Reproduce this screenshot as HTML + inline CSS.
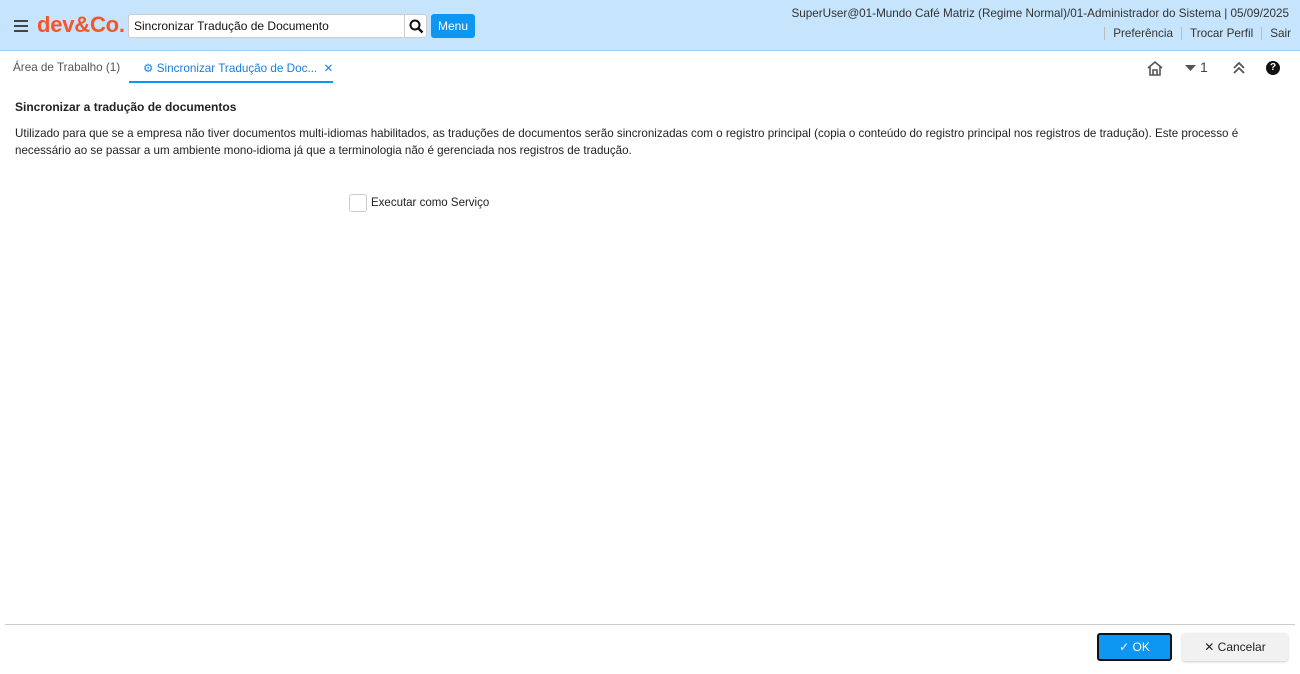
<!DOCTYPE html>
<html><head><meta charset="utf-8"><style>
*{box-sizing:border-box;margin:0;padding:0}
body{width:1300px;height:674px;background:#fff;font-family:"Liberation Sans",sans-serif;color:#222;position:relative;overflow:hidden;font-size:12px}
.hdr{position:absolute;left:0;top:0;width:1300px;height:51px;background:#c6e5fc;border-bottom:1px solid #9fd0f5}
.ham{position:absolute;left:14px;top:20px;width:14px}
.ham i{display:block;height:2px;background:#444;margin-bottom:3px}
.logo{position:absolute;left:37px;top:12px;font-size:22px;font-weight:bold;color:#f4562b;letter-spacing:-0.2px}
.search{position:absolute;left:128px;top:14px;width:299px;height:24px;background:#fff;border:1px solid #ccc;border-radius:3px;font-size:12px;padding:4px 5px;color:#111}
.sbtn{position:absolute;left:404px;top:14px;width:23px;height:24px;border-left:1px solid #ccc}
.menu{position:absolute;left:431px;top:14px;width:44px;height:24px;background:#0d96f2;color:#fff;border-radius:3px;font-size:12px;text-align:center;line-height:24px}
.user{position:absolute;right:11px;top:7px;font-size:11.7px;color:#333}
.links{position:absolute;right:9px;top:27px;font-size:11.7px;color:#333}
.links span{border-left:1px solid #bbb;padding:0 0 0 8px;margin-left:8px}
.tab1{position:absolute;left:13px;top:61px;color:#555;font-size:11.7px}
.tab2{position:absolute;left:143px;top:61px;color:#1a7fe0;font-size:11.7px}
.tabline{position:absolute;left:129px;top:81px;width:204px;height:2px;background:#0d96f2}
h1{position:absolute;left:15px;top:100px;font-size:12px;font-weight:bold}
.desc{position:absolute;left:15px;top:125px;width:1270px;font-size:11.6px;line-height:17px;color:#222}
.cb{position:absolute;left:349px;top:194px;width:18px;height:18px;border:1px solid #ccc;border-radius:3px}
.cbl{position:absolute;left:371px;top:197px;font-size:11.5px}
.foot{position:absolute;left:5px;top:624px;width:1290px;height:1px;background:#ccc}
.ok{position:absolute;left:1097px;top:633px;width:75px;height:28px;background:#0d96f2;border:2px solid #111;border-radius:3px;color:#fff;text-align:center;line-height:24px;font-size:12px}
.cancel{position:absolute;left:1182px;top:633px;width:106px;height:28px;background:#f1f1f1;border-radius:3px;text-align:center;line-height:28px;font-size:12px;color:#222;box-shadow:0 1px 2px rgba(0,0,0,.2)}
</style></head><body>
<div class="hdr">
<div class="ham"><i></i><i></i><i></i></div>
<div class="logo">dev&amp;Co.</div>
<div class="search">Sincronizar Tradução de Documento</div>
<div class="sbtn"><svg width="23" height="24" viewBox="0 0 23 24"><circle cx="10" cy="11" r="4.5" fill="none" stroke="#111" stroke-width="2"/><path d="M13.5 14.5l4 4" stroke="#111" stroke-width="2.4"/></svg></div>
<div class="menu">Menu</div>
<div class="user">SuperUser@01-Mundo Café Matriz (Regime Normal)/01-Administrador do Sistema | 05/09/2025</div>
<div class="links"><span>Preferência</span><span>Trocar Perfil</span><span>Sair</span></div>
</div>
<div class="tab1">Área de Trabalho (1)</div>
<div class="tab2">⚙ Sincronizar Tradução de Doc... &nbsp;✕</div>
<div class="tabline"></div>
<svg style="position:absolute;left:1146px;top:60px" width="18" height="17" viewBox="0 0 18 17"><path d="M2 8L9 2l7 6M4 7v8h10V7M7 15v-5h4v5" fill="none" stroke="#555" stroke-width="1.6"/></svg>
<svg style="position:absolute;left:1185px;top:64px" width="12" height="8"><path d="M0 1h11L5.5 7z" fill="#555"/></svg>
<div style="position:absolute;left:1200px;top:59px;font-size:14px;color:#444">1</div>
<svg style="position:absolute;left:1232px;top:61px" width="14" height="14" viewBox="0 0 14 14"><path d="M2 7l5-5 5 5M2 12l5-5 5 5" fill="none" stroke="#555" stroke-width="1.8"/></svg>
<div style="position:absolute;left:1266px;top:61px;width:14px;height:14px;border-radius:50%;background:#111;color:#fff;font-size:10px;font-weight:bold;text-align:center;line-height:14px">?</div>
<h1>Sincronizar a tradução de documentos</h1>
<div class="desc">Utilizado para que se a empresa não tiver documentos multi-idiomas habilitados, as traduções de documentos serão sincronizadas com o registro principal (copia o conteúdo do registro principal nos registros de tradução). Este processo é<br>necessário ao se passar a um ambiente mono-idioma já que a terminologia não é gerenciada nos registros de tradução.</div>
<div class="cb"></div><div class="cbl">Executar como Serviço</div>
<div class="foot"></div>
<div class="ok">✓ OK</div>
<div class="cancel">✕ Cancelar</div>
</body></html>
